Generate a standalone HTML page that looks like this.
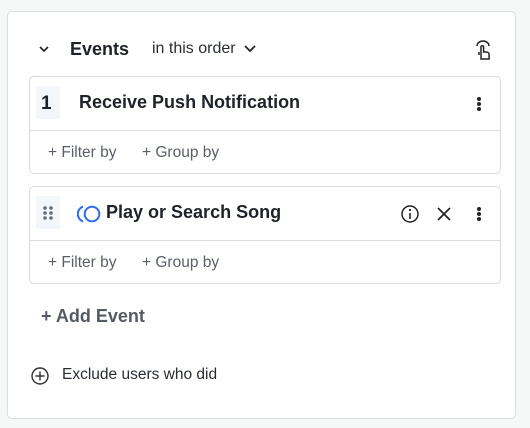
<!DOCTYPE html>
<html><head><style>
*{margin:0;padding:0;box-sizing:border-box}
body{width:530px;height:428px;background:#f6f7f7;font-family:"Liberation Sans",sans-serif;position:relative;overflow:hidden;color:#1f2228}
.abs{position:absolute}
.panel{left:7px;top:11px;width:509px;height:408px;background:#fff;border:1px solid #dcdee1;border-radius:5px}
.card{left:29px;width:472px;height:98px;border:1px solid #d9dbdf;border-radius:5px;background:#fff}
.div{left:0;right:0;top:53px;height:1px;background:#dcdee1}
.fb{font-size:15.5px;color:#5b5f68;top:67px}
.box{left:6px;top:9px;width:24px;height:33px;background:#f3f6fb;border-radius:2px}
.title{font-size:18px;font-weight:bold;top:15px;color:#1f2228}
.dots{width:4px;height:4px;background:#1f2228;border-radius:50%}
</style></head><body>
<div class="abs panel"></div>
<svg class="abs" style="left:38px;top:44px" width="12" height="10"><path d="M2 3l4 4 4-4" stroke="#222" stroke-width="1.6" fill="none"/></svg>
<div class="abs" style="left:70px;top:39px;font-size:18px;font-weight:bold">Events</div>
<div class="abs" style="left:152px;top:40px;font-size:16px;color:#2a2d33">in this order</div>
<svg class="abs" style="left:243px;top:43px" width="14" height="12"><path d="M2 3l5 5 5-5" stroke="#222" stroke-width="1.8" fill="none"/></svg>
<svg class="abs" style="left:470px;top:38px" width="26" height="24" viewBox="0 0 26 24"><path d="M7 8a6 5 0 0 1 12 0" stroke="#222" stroke-width="1.5" fill="none"/><path d="M11 21V9a1.3 1.3 0 0 1 2.6 0v5h3a2.5 2.5 0 0 1 2.5 2.5V21z M9 14v3" stroke="#222" stroke-width="1.5" fill="none"/></svg>

<div class="abs card" style="top:76px">
 <div class="abs box"></div>
 <div class="abs" style="left:11px;top:16px;font-size:19px;font-weight:bold;color:#1f2228">1</div>
 <div class="abs title" style="left:49px">Receive Push Notification</div>
 <div class="abs dots" style="left:447px;top:20px"></div><div class="abs dots" style="left:447px;top:25px"></div><div class="abs dots" style="left:447px;top:30px"></div>
 <div class="abs div"></div>
 <div class="abs fb" style="left:18px">+ Filter by</div>
 <div class="abs fb" style="left:112px">+ Group by</div>
</div>

<div class="abs card" style="top:186px">
 <div class="abs box"></div>
 <svg class="abs" style="left:12px;top:18px" width="14" height="16"><g fill="#666b75"><circle cx="3" cy="3" r="1.8"/><circle cx="9" cy="3" r="1.8"/><circle cx="3" cy="8" r="1.8"/><circle cx="9" cy="8" r="1.8"/><circle cx="3" cy="13" r="1.8"/><circle cx="9" cy="13" r="1.8"/></g></svg>
 <svg class="abs" style="left:47px;top:17px" width="26" height="20"><path d="M6 2.5a8 8 0 0 0 0 15" stroke="#2e6bf0" stroke-width="2" fill="none"/><circle cx="15" cy="10" r="7.3" stroke="#2e6bf0" stroke-width="2" fill="none"/></svg>
 <div class="abs title" style="left:76px">Play or Search Song</div>
 <svg class="abs" style="left:370px;top:17px" width="20" height="20"><circle cx="10" cy="10" r="8" stroke="#222" stroke-width="1.5" fill="none"/><circle cx="10" cy="6" r="1.1" fill="#222"/><path d="M10 9v6" stroke="#222" stroke-width="1.6"/></svg>
 <svg class="abs" style="left:406px;top:19px" width="16" height="16"><path d="M2 2l12 12M14 2L2 14" stroke="#222" stroke-width="1.7"/></svg>
 <div class="abs dots" style="left:447px;top:20px"></div><div class="abs dots" style="left:447px;top:25px"></div><div class="abs dots" style="left:447px;top:30px"></div>
 <div class="abs div"></div>
 <div class="abs fb" style="left:18px">+ Filter by</div>
 <div class="abs fb" style="left:112px">+ Group by</div>
</div>

<div class="abs" style="left:41px;top:306px;font-size:18px;font-weight:bold;color:#555a63">+ Add Event</div>
<svg class="abs" style="left:30px;top:366px" width="20" height="20"><circle cx="10" cy="10" r="8" stroke="#333" stroke-width="1.4" fill="none"/><path d="M10 5.5v9M5.5 10h9" stroke="#333" stroke-width="1.4"/></svg>
<div class="abs" style="left:62px;top:366px;font-size:15.5px;color:#2a2d33">Exclude users who did</div>
</body></html>
